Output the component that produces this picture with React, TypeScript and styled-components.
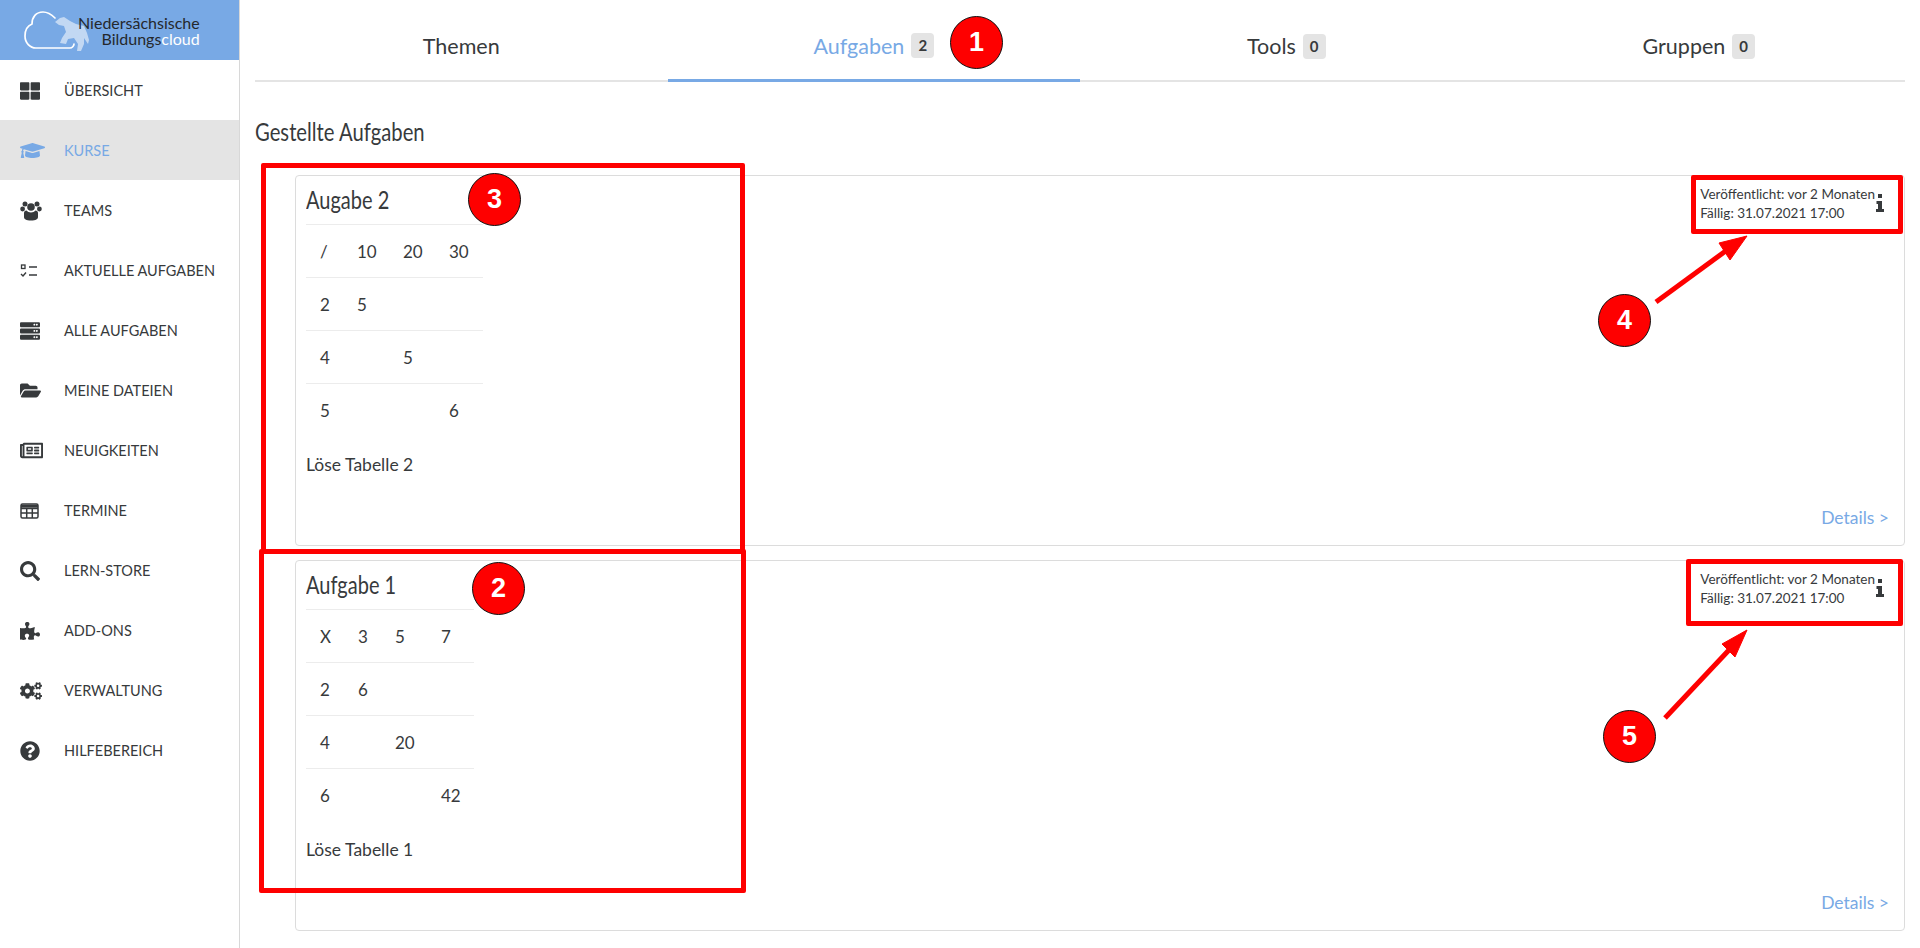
import React from 'react'
import styled, { createGlobalStyle } from 'styled-components'
import {
	FaThLarge,
	FaGraduationCap,
	FaServer,
	FaFolderOpen,
	FaRegNewspaper,
	FaSearch,
	FaPuzzlePiece,
	FaCogs,
	FaQuestionCircle,
} from 'react-icons/fa'

const BLUE = '#78a9e5'
const TEXT = '#373a3c'
const RED = '#fe0000'
const SANS = `'Lato', 'Noto Sans', sans-serif`

const Global = createGlobalStyle`
	html, body {
		margin: 0;
		background: #fff;
		color: ${TEXT};
		font-family: ${SANS};
	}
`

const Page = styled.div`
	position: relative;
	display: flex;
	width: 1920px;
	height: 948px;
	overflow: hidden;
`

const Sidebar = styled.aside`
	flex: 0 0 240px;
	box-sizing: border-box;
	border-right: 1px solid #d8d8d8;
`

const Logo = styled.div`
	display: flex;
	align-items: center;
	height: 60px;
	padding-left: 24px;
	background: ${BLUE};
`

const LogoText = styled.div`
	margin: 2px 0 0 -12px;
	font-size: 16px;
	line-height: 16px;
	text-align: right;
	color: #25282c;
	span {
		color: #fff;
	}
`

const NavItem = styled.div<{ $active?: boolean }>`
	display: flex;
	align-items: center;
	height: 60px;
	padding: 1px 0 0 20px;
	box-sizing: border-box;
	font-size: 14.5px;
	color: ${(p) => (p.$active ? BLUE : TEXT)};
	background: ${(p) => (p.$active ? '#e4e4e4' : 'transparent')};
`

const NavIcon = styled.span<{ $size?: number }>`
	display: flex;
	width: 44px;
	font-size: ${(p) => p.$size ?? 20}px;
`

const Main = styled.main`
	flex: 1;
	padding: 0 15px;
`

const Tabs = styled.nav`
	display: flex;
	height: 82px;
`

const Tab = styled.div<{ $active?: boolean }>`
	flex: 1;
	display: flex;
	align-items: center;
	justify-content: center;
	gap: 7px;
	box-sizing: border-box;
	padding-top: 12px;
	font-size: 21.5px;
	color: ${(p) => (p.$active ? BLUE : TEXT)};
	border-bottom: ${(p) => (p.$active ? `3px solid ${BLUE}` : '2px solid #e4e4e4')};
`

const Count = styled.span`
	padding: 3px 7px;
	border-radius: 4px;
	background: #e4e4e4;
	color: ${TEXT};
	font-size: 15px;
	font-weight: 700;
	line-height: 19px;
`

const Heading = styled.h2`
	margin: 34px 0 0;
	height: 59px;
	font-size: 25px;
	font-weight: 400;
	line-height: 30px;
	transform: scaleX(0.81);
	transform-origin: left center;
`

const Card = styled.article`
	display: flex;
	flex-direction: column;
	box-sizing: border-box;
	height: 371px;
	margin: 0 0 14px 40px;
	padding: 8px 10px;
	border: 1px solid #dcdcdc;
	border-radius: 4px;
`

const CardTop = styled.div`
	flex: 1;
	display: flex;
	justify-content: space-between;
	align-items: flex-start;
`

const CardTitle = styled.h3`
	margin: 0;
	height: 40px;
	font-size: 25px;
	font-weight: 400;
	line-height: 30px;
	transform: scaleX(0.8);
	transform-origin: left center;
`

const Grid = styled.table`
	table-layout: fixed;
	border-collapse: collapse;
	font-size: 17px;
`

const Col = styled.col<{ $width: number }>`
	width: ${(p) => p.$width}px;
`

const Row = styled.tr`
	height: 53px;
	border-top: 1px solid #ececec;
`

const Cell = styled.td`
	padding: 0 0 0 14px;
`

const Body = styled.p`
	margin: 16px 0 0;
	font-size: 17.5px;
	line-height: 24px;
`

const Meta = styled.div`
	display: flex;
	gap: 1px;
	margin: 1px 10px 0 0;
	font-size: 13.5px;
	line-height: 19px;
`

const InfoIcon = styled.span`
	display: flex;
	margin-top: 9px;
	height: 18px;
`

const CardFooter = styled.div`
	display: flex;
	justify-content: flex-end;
	margin: 0 5px 7px 0;
`

const Details = styled.a`
	color: ${BLUE};
	font-size: 17.5px;
	line-height: 24px;
`

const Frame = styled.div<{ $x: number; $y: number; $w: number; $h: number }>`
	position: absolute;
	left: ${(p) => p.$x}px;
	top: ${(p) => p.$y}px;
	width: ${(p) => p.$w}px;
	height: ${(p) => p.$h}px;
	box-sizing: border-box;
	border: 5px solid ${RED};
	border-radius: 2px;
`

const Marker = styled.div<{ $x: number; $y: number }>`
	position: absolute;
	left: ${(p) => p.$x - 26}px;
	top: ${(p) => p.$y - 26}px;
	display: flex;
	align-items: center;
	justify-content: center;
	box-sizing: border-box;
	width: 53px;
	height: 53px;
	border: 1px solid #111;
	border-radius: 50%;
	background: ${RED};
	color: #fff;
	font-family: 'Liberation Sans', sans-serif;
	font-size: 27px;
	font-weight: 700;
`

const ArrowLayer = styled.svg`
	position: absolute;
	left: 0;
	top: 0;
	pointer-events: none;
`

const TaskIcon = () => (
	<svg width="18" height="14" viewBox="0 0 18 14" fill="none" stroke="currentColor">
		<rect x="1.5" y="1" width="3.5" height="3.5" strokeWidth="1.3" />
		<path d="M1 10l2 2 3-3.5" strokeWidth="1.4" />
		<path d="M9 3h8M9 11h8" strokeWidth="1.6" />
	</svg>
)

const TeamIcon = () => (
	<svg width="22" height="20" viewBox="0 0 22 20" fill="currentColor">
		<circle cx="5" cy="3" r="2.5" />
		<circle cx="17" cy="3" r="2.5" />
		<circle cx="2.6" cy="8" r="2.4" />
		<circle cx="19.4" cy="8" r="2.4" />
		<circle cx="11" cy="6" r="3.8" />
		<path d="M4 12c0-1.5 1-2.5 2.5-2.5 1 1.3 2.7 2 4.5 2s3.500-.7 4.500-2c1.500 0 2.500 1 2.500 2.500v4c0 2-2 3.500-7 3.500s-7-1.500-7-3.500z" />
	</svg>
)

const GridIcon = () => (
	<svg width="19" height="16" viewBox="0 0 19 16" fill="none" stroke="currentColor" strokeWidth="1.5">
		<rect x="1" y="1" width="17" height="14" rx="1.5" />
		<path d="M1 5.500h17M1 10h17M6.700 5.500V15M12.300 5.500V15" />
		<path d="M1 3.200h17" strokeWidth="3" />
	</svg>
)

const IIcon = () => (
	<svg width="8" height="18" viewBox="0 0 8 18" fill="currentColor">
		<rect x="2" y="0" width="4" height="4" />
		<path d="M0.500 7h5.500v8h2v3H0v-3h2v-5H0.500z" />
	</svg>
)

const LogoMark = () => (
	<svg width="66" height="44" viewBox="0 0 66 44" fill="none">
		<path
			d="M31 10C27 6 23 4 19 4 12 4 8 9 8 16 3 18 1 23 1 28c0 7 5 12 11 12h34c2 0 4-2 4-4"
			stroke="#fff"
			strokeWidth="1.7"
			strokeLinecap="round"
		/>
		<path
			d="M31 14l5-4 4-1 6 4 6 3 8 2 3 7 2 7-1 4-4-6v6l-3 7h-4l1-7-4-6-6 1-2 5-6-1 2-5 4-6-2-6-5-1z"
			fill="#fff"
			fillOpacity="0.55"
		/>
	</svg>
)

const navItems = [
	{ label: 'ÜBERSICHT', icon: <FaThLarge /> },
	{ label: 'KURSE', icon: <FaGraduationCap />, active: true, size: 25 },
	{ label: 'TEAMS', icon: <TeamIcon /> },
	{ label: 'AKTUELLE AUFGABEN', icon: <TaskIcon /> },
	{ label: 'ALLE AUFGABEN', icon: <FaServer /> },
	{ label: 'MEINE DATEIEN', icon: <FaFolderOpen />, size: 21 },
	{ label: 'NEUIGKEITEN', icon: <FaRegNewspaper />, size: 23 },
	{ label: 'TERMINE', icon: <GridIcon /> },
	{ label: 'LERN-STORE', icon: <FaSearch /> },
	{ label: 'ADD-ONS', icon: <FaPuzzlePiece /> },
	{ label: 'VERWALTUNG', icon: <FaCogs />, size: 22 },
	{ label: 'HILFEBEREICH', icon: <FaQuestionCircle /> },
]

const tabs = [
	{ label: 'Themen' },
	{ label: 'Aufgaben', count: 2, active: true },
	{ label: 'Tools', count: 0 },
	{ label: 'Gruppen', count: 0 },
]

const tasks = [
	{
		title: 'Augabe 2',
		text: 'Löse Tabelle 2',
		cols: [37, 46, 46, 48],
		rows: [
			['/', '10', '20', '30'],
			['2', '5', '', ''],
			['4', '', '5', ''],
			['5', '', '', '6'],
		],
	},
	{
		title: 'Aufgabe 1',
		text: 'Löse Tabelle 1',
		cols: [38, 37, 46, 47],
		rows: [
			['X', '3', '5', '7'],
			['2', '6', '', ''],
			['4', '', '20', ''],
			['6', '', '', '42'],
		],
	},
]

export default function App() {
	return (
		<Page>
			<Global />
			<Sidebar>
				<Logo>
					<LogoMark />
					<LogoText>
						Niedersächsische
						<br />
						Bildungs<span>cloud</span>
					</LogoText>
				</Logo>
				{navItems.map((item) => (
					<NavItem key={item.label} $active={item.active}>
						<NavIcon $size={item.size}>{item.icon}</NavIcon>
						{item.label}
					</NavItem>
				))}
			</Sidebar>
			<Main>
				<Tabs>
					{tabs.map((tab) => (
						<Tab key={tab.label} $active={tab.active}>
							{tab.label}
							{tab.count !== undefined && <Count>{tab.count}</Count>}
						</Tab>
					))}
				</Tabs>
				<Heading>Gestellte Aufgaben</Heading>
				{tasks.map((task) => (
					<Card key={task.title}>
						<CardTop>
							<div>
								<CardTitle>{task.title}</CardTitle>
								<Grid>
									<colgroup>
										{task.cols.map((w, i) => (
											<Col key={i} $width={w} />
										))}
									</colgroup>
									<tbody>
										{task.rows.map((row, r) => (
											<Row key={r}>
												{row.map((value, c) => (
													<Cell key={c}>{value}</Cell>
												))}
											</Row>
										))}
									</tbody>
								</Grid>
								<Body>{task.text}</Body>
							</div>
							<Meta>
								<div>
									Veröffentlicht: vor 2 Monaten
									<br />
									Fällig: 31.07.2021 17:00
								</div>
								<InfoIcon>
									<IIcon />
								</InfoIcon>
							</Meta>
						</CardTop>
						<CardFooter>
							<Details>Details &gt;</Details>
						</CardFooter>
					</Card>
				))}
			</Main>

			<Frame $x={261} $y={163} $w={484} $h={391} />
			<Frame $x={259} $y={549} $w={487} $h={344} />
			<Frame $x={1691} $y={175} $w={212} $h={59} />
			<Frame $x={1686} $y={559} $w={217} $h={67} />
			<ArrowLayer width="1920" height="948" viewBox="0 0 1920 948">
				<g fill={RED} stroke={RED}>
					<path d="M1656 302L1727 250" strokeWidth="5" />
					<path d="M1747 236L1719 243 1730 260z" />
					<path d="M1665 718L1729 650" strokeWidth="5" />
					<path d="M1747 630L1722 644 1735 657z" />
				</g>
			</ArrowLayer>
			<Marker $x={976} $y={42}>1</Marker>
			<Marker $x={498} $y={588}>2</Marker>
			<Marker $x={494} $y={199}>3</Marker>
			<Marker $x={1624} $y={320}>4</Marker>
			<Marker $x={1629} $y={736}>5</Marker>
		</Page>
	)
}
